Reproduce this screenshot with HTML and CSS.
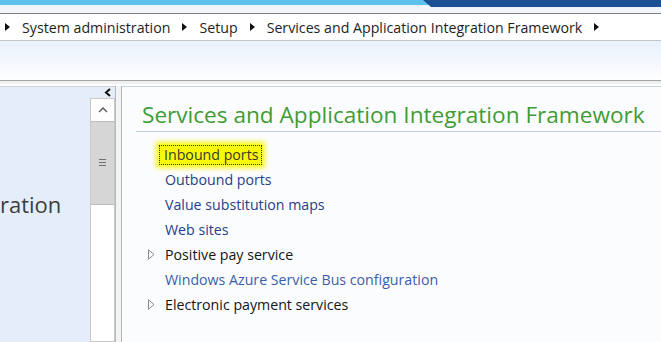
FILE: index.html
```html
<!DOCTYPE html>
<html>
<head>
    <title>Services and Application Integration Framework</title>
    <link rel="stylesheet" href="styles.css">
</head>
<body>
    <div class="titlebar">
        <div class="tab-dark"></div>
    </div>

    <div class="breadcrumb">
        <span class="crumb-arrow"></span>
        <span class="crumb">System administration</span>
        <span class="crumb-arrow"></span>
        <span class="crumb">Setup</span>
        <span class="crumb-arrow"></span>
        <span class="crumb">Services and Application Integration Framework</span>
        <span class="crumb-arrow"></span>
    </div>

    <div class="ribbon"></div>

    <div class="workspace">
        <div class="nav-pane">
            <div class="nav-title">ration</div>
        </div>

        <div class="scroll-col">
            <div class="collapse">
                <svg width="8" height="9" viewBox="0 0 8 9"><path d="M6 1 L2 4.5 L6 8" fill="none" stroke="#111" stroke-width="2"/></svg>
            </div>
            <div class="scrollbar">
                <div class="scroll-up">
                    <svg width="10" height="6" viewBox="0 0 10 6"><path d="M1 5 L5 1 L9 5" fill="none" stroke="#555" stroke-width="1.3"/></svg>
                </div>
                <div class="scroll-thumb">
                    <span class="grip"></span>
                </div>
                <div class="scroll-track"></div>
            </div>
        </div>

        <div class="splitter"></div>

        <div class="content">
            <h1>Services and Application Integration Framework</h1>
            <ul class="menu">
                <li><a class="link focused">Inbound ports</a></li>
                <li><a class="link">Outbound ports</a></li>
                <li><a class="link">Value substitution maps</a></li>
                <li><a class="link">Web sites</a></li>
                <li class="group">
                    <svg class="expander" width="7" height="11" viewBox="0 0 7 11"><path d="M0.5 0.8 L6 5.5 L0.5 10.2 Z" fill="none" stroke="#8c8c8c" stroke-width="1"/></svg>
                    Positive pay service
                </li>
                <li><a class="link light">Windows Azure Service Bus configuration</a></li>
                <li class="group">
                    <svg class="expander" width="7" height="11" viewBox="0 0 7 11"><path d="M0.5 0.8 L6 5.5 L0.5 10.2 Z" fill="none" stroke="#8c8c8c" stroke-width="1"/></svg>
                    Electronic payment services
                </li>
            </ul>
        </div>
    </div>
</body>
</html>
```

FILE: styles.css
```css
:root {
    --ui-font: "Segoe UI", "Open Sans", "Noto Sans", sans-serif;
    --link: #263f8a;
    --green: #3f9c35;
}
body {
    margin: 0;
    width: 661px;
    height: 342px;
    overflow: hidden;
    background: #fff;
    font-family: var(--ui-font);
    display: flex;
    flex-direction: column;
}
.titlebar {
    height: 13px;
    flex: none;
    background: linear-gradient(to bottom, #5cc2ea 0, #5cc2ea 5px, #eef4fa 5px, #f4f7fb 13px);
    border-bottom: 1px solid #7d7d7d;
    position: relative;
    overflow: hidden;
}
.tab-dark {
    position: absolute;
    left: 423px;
    right: 0;
    top: 0;
    height: 7px;
    background: #1c4f92;
    clip-path: polygon(0 0, 100% 0, 100% 100%, 8px 100%);
}
.breadcrumb {
    height: 26px;
    flex: none;
    display: flex;
    align-items: center;
    gap: 12px;
    padding-left: 5px;
    border-bottom: 1px solid #c4c4c4;
    font-size: 14.2px;
    color: #1e1e1e;
}
.crumb-arrow {
    width: 0;
    height: 0;
    border-top: 4px solid transparent;
    border-bottom: 4px solid transparent;
    border-left: 5px solid #111;
}
.ribbon {
    height: 39px;
    flex: none;
    background: linear-gradient(to bottom, #e9f1fb, #fdfeff);
    border-bottom: 1px solid #a4a4a4;
    box-shadow: 0 3px 0 #f0f0f0;
}
.workspace {
    flex: 1;
    display: flex;
    margin-top: 5px;
    min-height: 0;
}
.nav-pane {
    width: 90px;
    flex: none;
    background: #e4edf8;
    border-top: 1px solid #c9d3de;
    overflow: hidden;
}
.nav-title {
    white-space: nowrap;
    font-size: 22px;
    color: #3d3d3d;
    margin-top: 102px;
}
.scroll-col {
    width: 25px;
    flex: none;
    display: flex;
    flex-direction: column;
    border-top: 1px solid #c9d3de;
    background: #fff;
}
.collapse {
    height: 11px;
    display: flex;
    justify-content: flex-end;
    align-items: center;
    padding-right: 3px;
    background: #e4edf8;
}
.scrollbar {
    flex: 1;
    display: flex;
    flex-direction: column;
    border: 1px solid #c8c8c8;
}
.scroll-up {
    height: 22px;
    display: flex;
    justify-content: center;
    align-items: center;
    background: #fff;
}
.scroll-thumb {
    height: 82px;
    background: #d6d6d6;
    border-top: 1px solid #bdbdbd;
    border-bottom: 1px solid #bdbdbd;
    display: flex;
    justify-content: center;
    align-items: center;
}
.grip {
    width: 7px;
    height: 8px;
    background: repeating-linear-gradient(to bottom, #6f6f6f 0, #6f6f6f 1.5px, transparent 1.5px, transparent 3px);
}
.scroll-track {
    flex: 1;
    background: #fff;
}
.splitter {
    width: 5px;
    flex: none;
    border-left: 1px solid #b8b8b8;
    background: #f3f3f3;
}
.content {
    flex: 1;
    background: #fbfcfe;
    border-left: 1px solid #b4b4b4;
    border-top: 1px solid #c9d3de;
    padding-left: 14px;
}
h1 {
    margin: 14px 0 0;
    padding: 0 0 2px 6px;
    font-weight: normal;
    font-size: 22.6px;
    line-height: 28px;
    color: var(--green);
    border-bottom: 1px solid #c5cfdb;
    white-space: nowrap;
}
.menu {
    list-style: none;
    margin: 10px 0 0;
    padding: 0;
    font-size: 14.2px;
}
.menu li {
    height: 25px;
    line-height: 25px;
    padding-left: 29px;
    display: flex;
    align-items: center;
    color: #151515;
}
.link {
    color: var(--link);
}
.link.light {
    color: #3b5ea8;
}
.focused {
    margin-left: -6px;
    padding: 0 4px 0 5px;
    line-height: 20px;
    outline: 1px dotted #333;
    outline-offset: -1px;
    background: #f8f80e;
    box-shadow: 0 0 5px 3px #f8f80e;
    color: #3b3b24;
}
.menu li.group {
    padding-left: 12px;
}
.expander {
    margin-right: 10px;
    flex: none;
}
```
